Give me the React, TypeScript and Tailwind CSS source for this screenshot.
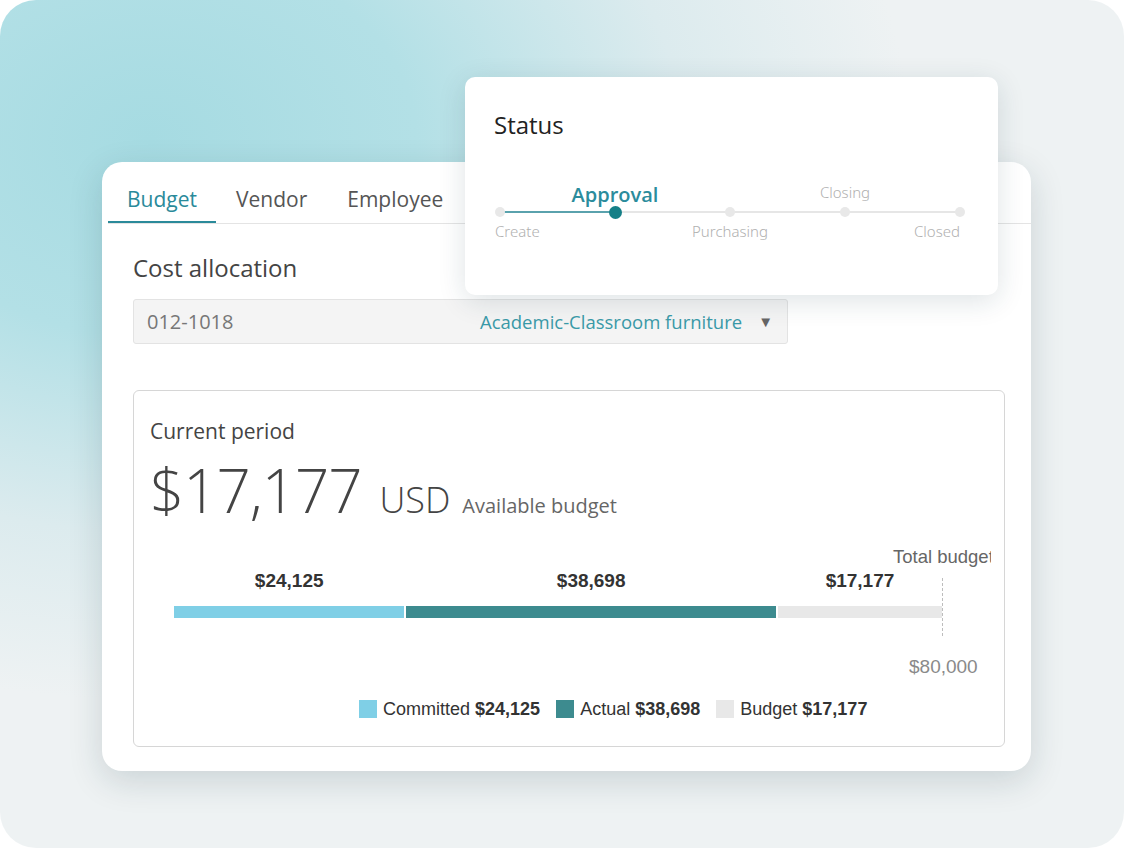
import React from "react";

type Step = { name: string; pos: "above" | "below"; align: "start" | "center" | "end"; active?: boolean };

const steps: Step[] = [
  { name: "Create", pos: "below", align: "start" },
  { name: "Approval", pos: "above", align: "center", active: true },
  { name: "Purchasing", pos: "below", align: "center" },
  { name: "Closing", pos: "above", align: "center" },
  { name: "Closed", pos: "below", align: "end" },
];

function StatusCard() {
  return (
    <div className="absolute left-[465px] top-[77px] w-[533px] h-[218px] rounded-[10px] bg-white shadow-[0_6px_28px_rgba(20,60,70,0.14)] pl-[29px] pt-[32px]">
      <div className="text-[24px] leading-[32px] text-[#222] font-['Open_Sans',sans-serif]">Status</div>
      <div className="relative mt-[66px] ml-[1px] w-[470px] h-[10px] flex justify-between items-center">
        {/* track */}
        <div className="absolute left-[5px] right-[5px] top-[4px] h-[2px] bg-[#e6e6e6]" />
        <div className="absolute left-[5px] w-[115px] top-[4px] h-[2px] bg-[#5aa2ad]" />
        {steps.map((s) => (
          <div key={s.name} className="relative flex items-center justify-center w-[10px] h-[10px]">
            <div
              className={
                s.active
                  ? "w-[13px] h-[13px] rounded-full bg-[#157f87] shrink-0"
                  : "w-[10px] h-[10px] rounded-full bg-[#e8e8e8] shrink-0"
              }
            />
            {s.pos === "above" ? (
              <div
                className={
                  s.active
                    ? "absolute bottom-[10px] whitespace-nowrap text-[20px] leading-[24px] font-semibold text-[#2b8c9c] font-['Open_Sans',sans-serif]"
                    : "absolute bottom-[16px] whitespace-nowrap text-[15px] leading-[18px] text-[#b0b0b0] font-['Noto_Sans',sans-serif] font-light"
                }
              >
                {s.name}
              </div>
            ) : (
              <div
                className={
                  "absolute top-[15px] whitespace-nowrap text-[15px] leading-[18px] text-[#b0b0b0] font-['Noto_Sans',sans-serif] font-light " +
                  (s.align === "start" ? "left-0" : s.align === "end" ? "right-[5px]" : "")
                }
              >
                {s.name}
              </div>
            )}
          </div>
        ))}
      </div>
    </div>
  );
}

const segments = [
  { label: "Committed", value: 24125, color: "#7fcfe6" },
  { label: "Actual", value: 38698, color: "#3d8b8f" },
  { label: "Budget", value: 17177, color: "#e8e8e8" },
];
const TOTAL = 80000;
const BAR_W = 764;

const fmt = (n: number) => "$" + n.toLocaleString("en-US");

function BudgetChart() {
  return (
    <div className="mt-[21px] ml-[40px] w-[817px] overflow-hidden font-['Liberation_Sans_Narrow','Liberation_Sans',sans-serif]">
      <div className="h-[22px] pl-[719px] text-[18.5px] leading-[22px] text-[#666] whitespace-nowrap">Total budget</div>
      <div className="relative">
        <div className="flex gap-[2px] w-[768px] text-[19px] leading-[22px] font-bold text-[#333] pt-[2px]">
          {segments.map((s) => (
            <div key={s.label} className="text-center" style={{ width: (s.value / TOTAL) * BAR_W }}>
              {fmt(s.value)}
            </div>
          ))}
        </div>
        <div className="flex gap-[2px] w-[768px] mt-[14px] h-[12px]">
          {segments.map((s) => (
            <div key={s.label} style={{ width: (s.value / TOTAL) * BAR_W, background: s.color }} />
          ))}
        </div>
        {/* total marker */}
        <div className="absolute left-[768px] top-[10px] h-[58px] border-l border-dashed border-[#bdbdbd]" />
      </div>
      <div className="mt-[38px] pl-[735px] text-[19px] leading-[22px] text-[#8a8a8a]">$80,000</div>
      <div className="mt-[20px] ml-[185px] flex items-center gap-[16px] text-[18px] leading-[22px] text-[#333]">
        {segments.map((s) => (
          <div key={s.label} className="flex items-center gap-[6px]">
            <span className="w-[18px] h-[18px]" style={{ background: s.color }} />
            <span>
              {s.label} <b>{fmt(s.value)}</b>
            </span>
          </div>
        ))}
      </div>
    </div>
  );
}

export default function App() {
  return (
    <div className="w-[1124px] h-[850px] bg-white">
      <div className="relative w-[1124px] h-[848px] rounded-[36px] overflow-hidden bg-[radial-gradient(ellipse_760px_560px_at_150px_140px,#a6dbe2_0%,#b3e0e6_35%,#dcebee_70%,#eef2f3_100%)] pl-[102px] pt-[162px] font-['Open_Sans',sans-serif]">
        <div className="w-[929px] h-[609px] rounded-[20px] bg-white shadow-[0_10px_34px_rgba(20,50,60,0.16)] pl-[6px]">
          {/* tabs */}
          <div className="flex border-b border-[#e4e4e4] pt-[12px] pr-[6px]">
            {["Budget", "Vendor", "Employee"].map((t, i) => (
              <div
                key={t}
                className={
                  i === 0
                    ? "px-[19px] h-[49px] pt-[12px] text-[21px] leading-[26px] text-[#2a8a9a] border-b-2 border-[#2a8a9a] -mb-px"
                    : "px-[20px] h-[49px] pt-[12px] text-[21px] leading-[26px] text-[#555]"
                }
              >
                {t}
              </div>
            ))}
          </div>
          <div className="pl-[25px] pr-[26px]">
            <div className="mt-[28px] text-[24px] leading-[32px] text-[#444]">Cost allocation</div>
            <div className="mt-[15px] w-[655px] h-[45px] rounded-[3px] border border-[#e3e3e3] bg-[#f4f4f4] flex items-center pl-[13px] pr-[14px]">
              <span className="text-[20px] text-[#777]">012-1018</span>
              <span className="ml-auto text-[18.5px] text-[#3a9aa8]">Academic-Classroom furniture</span>
              <span className="ml-[16px] text-[15px] text-[#666]">▼</span>
            </div>
            <div className="mt-[46px] h-[357px] rounded-[6px] border border-[#d6d6d6] pt-[26px] pl-[16px]">
              <div className="text-[21px] leading-[28px] text-[#444]">Current period</div>
              <div className="flex items-baseline mt-[10px] text-[#444]">
                <span className="text-[60px] leading-[70px] font-light tracking-[-1px]">$17,177</span>
                <span className="ml-[18px] text-[36px] leading-[40px] font-light">USD</span>
                <span className="ml-[12px] text-[20px] text-[#666]">Available budget</span>
              </div>
              <div className="-ml-[16px]">
                <BudgetChart />
              </div>
            </div>
          </div>
        </div>
        <StatusCard />
      </div>
    </div>
  );
}
